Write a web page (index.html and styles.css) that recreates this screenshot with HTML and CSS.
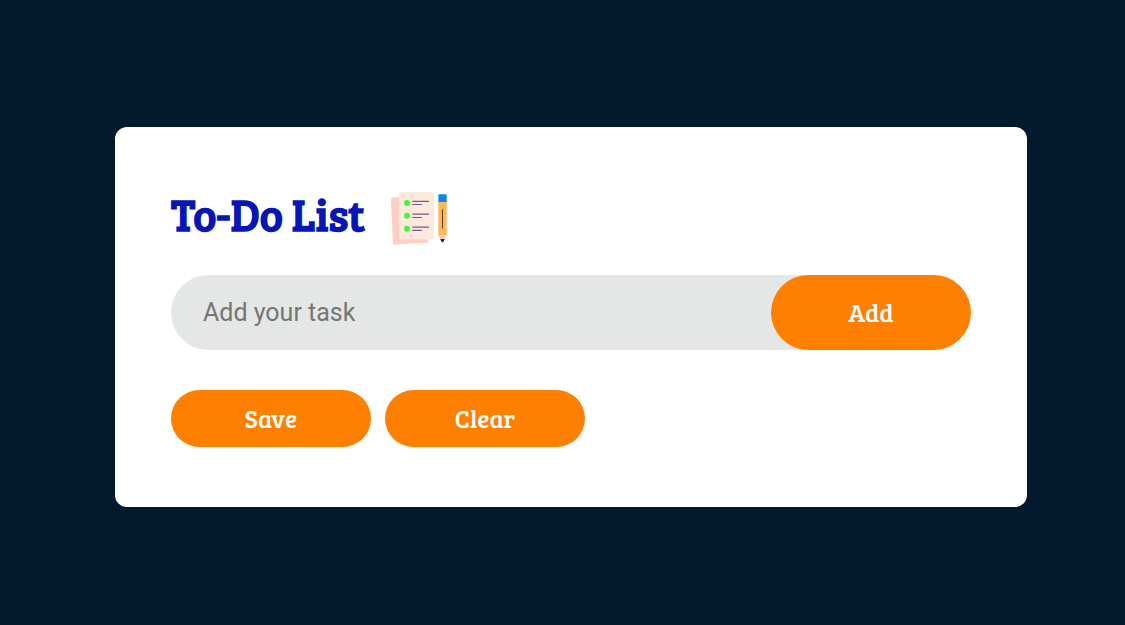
FILE: index.html
```html
<!DOCTYPE html>
<html lang="en">
<head>
  <meta charset="utf-8">
  <meta name="viewport" content="width=device-width, initial-scale=1">
  <title>To-Do List</title>
  <link rel="stylesheet" href="styles.css">
</head>
<body>
  <main class="card">
    <header class="card-header">
      <h1 class="title">To-Do List</h1>
      <svg class="title-icon" viewBox="0 0 60 60" aria-hidden="true">
        <path fill="#ffd0c2" d="M3.500 9.500 L12 9 L39 52 V53.500 Q39 54.700 37.800 54.800 L5.600 56.500 Q4 56.600 3.900 55 L1.900 11.200 Q1.900 9.600 3.500 9.500Z"/>
        <rect x="10" y="4.300" width="35" height="47" rx="1.800" fill="#ffe8dc"/>
        <g fill="#3dfc35">
          <circle cx="18" cy="15" r="3"/>
          <circle cx="18" cy="27.800" r="3"/>
          <circle cx="18" cy="40.800" r="3"/>
        </g>
        <path stroke="#6f5b93" stroke-width="1.200" stroke-linecap="round" d="M23.800 13.400H39.500M23.800 16.500H32.500M23.800 26.200H39.500M23.800 29.500H32.500M23.800 39.200H39.500M23.800 42.400H32.500"/>
        <rect x="49.400" y="13" width="8.300" height="34.500" fill="#ffb74f"/>
        <path fill="#0788f5" d="M49.400 14V7Q49.400 6.200 50.200 6.200H56.900Q57.700 6.200 57.700 7V14Z"/>
        <path fill="#ffc1c5" d="M49.400 47H57.700L55.500 51.500H51.500Z"/>
        <path fill="#35203b" d="M51.200 51H55.800L54.500 53.800Q53.500 54.800 52.500 53.800Z"/>
        <path stroke="#593d29" stroke-width="1" stroke-linecap="round" d="M53.500 21.700V40"/>
      </svg>
    </header>
    <form class="task-row" onsubmit="return false">
      <input class="task-input" type="text" placeholder="Add your task" aria-label="Add your task">
      <button class="button button-add" type="submit">Add</button>
    </form>
    <div class="actions">
      <button class="button" type="button">Save</button>
      <button class="button" type="button">Clear</button>
    </div>
  </main>
</body>
</html>
```
FILE: styles.css
```css
* {
  box-sizing: border-box;
}

body {
  min-height: 100vh;
  margin: 0;
  padding: 127px 98px 32px 115px;
  background: #03192d;
  font-family: "Bree Serif", "Liberation Serif", serif;
}

.card {
  padding: 60px 56px;
  border-radius: 12px;
  background: #fff;
}

.card-header {
  display: flex;
  align-items: center;
  gap: 25px;
  margin-bottom: 26px;
  min-height: 62px;
}

.title {
  margin: 0;
  padding-bottom: 9px;
  color: #0616b8;
  font-size: 44px;
  line-height: 48px;
  font-weight: 700;
}

.title-icon {
  width: 60px;
  height: 60px;
  flex: none;
}

.task-row {
  display: flex;
  margin-bottom: 40px;
  border-radius: 40px;
  background: #e4e7e6;
}

.task-input {
  flex: 1;
  min-width: 0;
  padding: 0 32px;
  border: 0;
  outline: 0;
  background: transparent;
  color: #333;
  font-family: Roboto, sans-serif;
  font-size: 25px;
}

.task-input::placeholder {
  color: #757575;
}

.button {
  width: 200px;
  padding: 14px 16px;
  border: 0;
  border-radius: 40px;
  background: #ff8000;
  color: #fff;
  font-family: inherit;
  font-size: 25px;
  line-height: 29px;
  font-weight: 400;
  cursor: pointer;
}

.button-add {
  padding: 23px 16px;
}

.actions {
  display: flex;
  flex-wrap: wrap;
  gap: 14px;
}
```
